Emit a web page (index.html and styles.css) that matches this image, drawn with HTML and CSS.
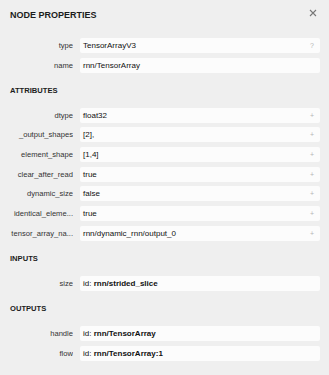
FILE: index.html
```html
<!DOCTYPE html>
<html lang="en">
<head>
    <meta charset="UTF-8" />
    <meta name="viewport" content="width=device-width, initial-scale=1.0" />
    <title>Node Properties</title>
    <link rel="stylesheet" href="styles.css">
</head>
<body>

<div class="sidebar">
    <div class="header">
        <h2>NODE PROPERTIES</h2>
        <span class="close">
            <svg width="8" height="8" viewBox="0 0 8 8"><path d="M1 1L7 7M7 1L1 7" stroke="#777" stroke-width="1.1" fill="none"/></svg>
        </span>
    </div>

    <div class="rows">
        <div class="row">
            <div class="label">type</div>
            <div class="value"><span class="btn">?</span>TensorArrayV3</div>
        </div>
        <div class="row">
            <div class="label">name</div>
            <div class="value">rnn/TensorArray</div>
        </div>
    </div>

    <h3>ATTRIBUTES</h3>
    <div class="rows">
        <div class="row">
            <div class="label">dtype</div>
            <div class="value"><span class="btn">+</span>float32</div>
        </div>
        <div class="row">
            <div class="label">_output_shapes</div>
            <div class="value"><span class="btn">+</span>[2],</div>
        </div>
        <div class="row">
            <div class="label">element_shape</div>
            <div class="value"><span class="btn">+</span>[1,4]</div>
        </div>
        <div class="row">
            <div class="label">clear_after_read</div>
            <div class="value"><span class="btn">+</span>true</div>
        </div>
        <div class="row">
            <div class="label">dynamic_size</div>
            <div class="value"><span class="btn">+</span>false</div>
        </div>
        <div class="row">
            <div class="label">identical_eleme...</div>
            <div class="value"><span class="btn">+</span>true</div>
        </div>
        <div class="row">
            <div class="label">tensor_array_na...</div>
            <div class="value"><span class="btn">+</span>rnn/dynamic_rnn/output_0</div>
        </div>
    </div>

    <h3>INPUTS</h3>
    <div class="rows">
        <div class="row">
            <div class="label">size</div>
            <div class="value">id: <b>rnn/strided_slice</b></div>
        </div>
    </div>

    <h3>OUTPUTS</h3>
    <div class="rows">
        <div class="row">
            <div class="label">handle</div>
            <div class="value">id: <b>rnn/TensorArray</b></div>
        </div>
        <div class="row">
            <div class="label">flow</div>
            <div class="value">id: <b>rnn/TensorArray:1</b></div>
        </div>
    </div>
</div>

</body>
</html>
```

FILE: styles.css
```css
body {
    margin: 0;
    background: #efefef;
    font-family: "Liberation Sans", Arial, sans-serif;
    color: #222;
}
.sidebar {
    padding: 0 9px 0 10px;
}
.header {
    display: flex;
    justify-content: space-between;
    align-items: center;
    height: 29px;
}
h2 {
    margin: 0;
    font-size: 9px;
    font-weight: bold;
    color: #1c1c1c;
}
.close {
    display: flex;
    margin-right: 3px;
    margin-top: -3px;
}
h3 {
    margin: 12px 0 11px;
    font-size: 7.6px;
    line-height: 12px;
    font-weight: bold;
    color: #1c1c1c;
}
.rows {
    display: flex;
    flex-direction: column;
    gap: 4.7px;
}
.header + .rows {
    margin-top: 9px;
}
.row {
    display: grid;
    grid-template-columns: 63px 1fr;
    column-gap: 7px;
    height: 15px;
    font-size: 8px;
    line-height: 15px;
}
.label {
    font-size: 7.6px;
    text-align: right;
    color: #333;
    white-space: nowrap;
    overflow: hidden;
}
.value {
    background: #fcfcfc;
    border-radius: 2px;
    padding: 0 6px 0 3px;
    color: #111;
    white-space: nowrap;
}
.btn {
    float: right;
    color: #b5b5b5;
    font-size: 7px;
}
```
